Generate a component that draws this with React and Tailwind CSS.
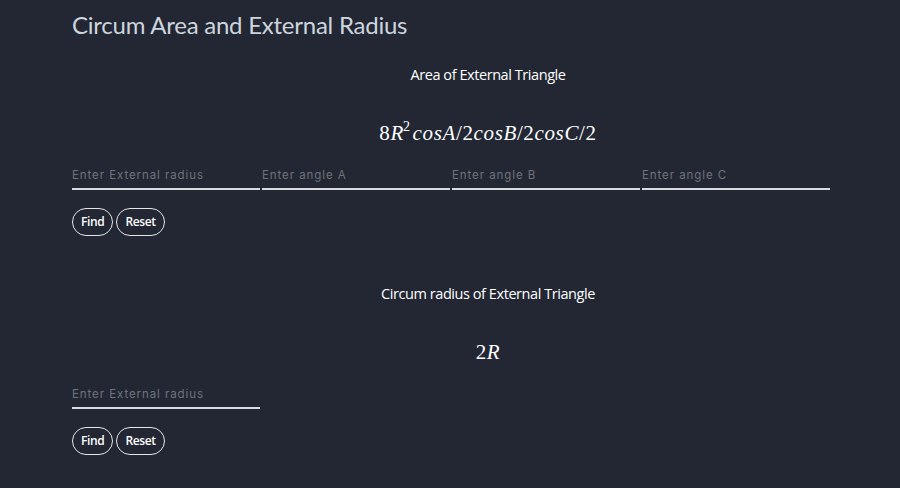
import React from 'react';

const sans = { fontFamily: '"Open Sans", Lato, sans-serif' };

// single underlined input
const Field = ({ placeholder }) => (
  <input
    placeholder={placeholder}
    className="w-[188px] h-[24px] bg-transparent border-0 border-b-2 border-[#d8dbe0] text-[11.5px] tracking-[0.08em] text-gray-300 placeholder:text-[#6f737c] outline-none px-0 pb-[4px] mr-[2px]"
    style={{ fontFamily: 'Inter, "Open Sans", sans-serif' }}
  />
);

const Buttons = () => (
  <div className="flex gap-[3px]">
    <button className="h-[28px] px-[8px] rounded-full border border-[#e6e6e6] text-white text-[12px] font-semibold tracking-[-0.03em]">
      Find
    </button>
    <button className="h-[28px] px-[8px] rounded-full border border-[#e6e6e6] text-white text-[12px] font-semibold tracking-[-0.03em]">
      Reset
    </button>
  </div>
);

const Heading = ({ children }) => (
  <div className="w-[832px] text-center text-white text-[14.5px] tracking-[-0.03em]" style={sans}>
    {children}
  </div>
);

const Formula = ({ children }) => (
  <div
    className="w-[832px] text-center text-white text-[21px] italic leading-[24px] tracking-[0.03em]"
    style={{ fontFamily: '"Liberation Serif", "DejaVu Serif", serif' }}
  >
    {children}
  </div>
);

const Up = ({ children }) => <span className="not-italic">{children}</span>;

export default function App() {
  return (
    <div className="min-h-[488px] w-[900px] overflow-hidden bg-[#222733]" style={sans}>
      <div className="pl-[72px]">
        <h1
          className="pt-[10px] text-[24px] leading-[30px] text-[#cdd5df] tracking-[-0.01em]"
          style={{ fontFamily: 'Lato, "Open Sans", sans-serif' }}
        >
          Circum Area and External Radius
        </h1>

        <div className="mt-[24px]">
          <Heading>Area of External Triangle</Heading>
        </div>
        <div className="mt-[35px]">
          <Formula>
            <Up>8</Up>R
            <span className="not-italic inline-block relative -top-[9px] text-[14px] -ml-[1px] mr-[2px]">2</span>
            cosA<Up>/2</Up>cosB<Up>/2</Up>cosC<Up>/2</Up>
          </Formula>
        </div>
        <div className="mt-[18px] flex">
          <Field placeholder="Enter External radius" />
          <Field placeholder="Enter angle A" />
          <Field placeholder="Enter angle B" />
          <Field placeholder="Enter angle C" />
        </div>
        <div className="mt-[18px]">
          <Buttons />
        </div>

        <div className="mt-[47px]">
          <Heading>Circum radius of External Triangle</Heading>
        </div>
        <div className="mt-[35px]">
          <Formula>
            <Up>2</Up>R
          </Formula>
        </div>
        <div className="mt-[21px] flex">
          <Field placeholder="Enter External radius" />
        </div>
        <div className="mt-[18px]">
          <Buttons />
        </div>
      </div>
    </div>
  );
}
